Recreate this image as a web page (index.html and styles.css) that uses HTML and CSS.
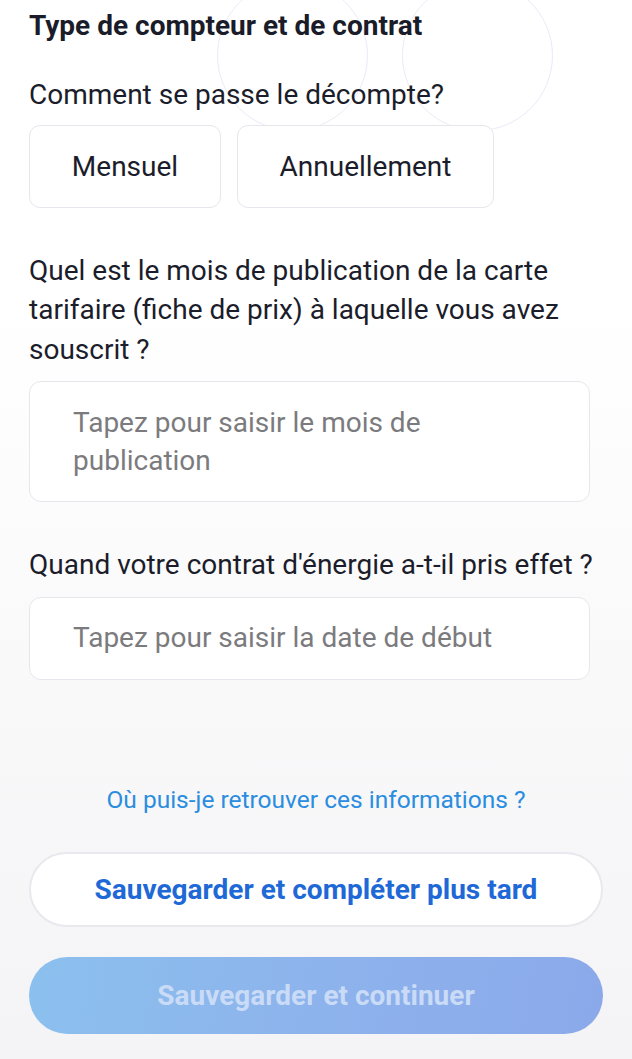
FILE: index.html
```html
<!DOCTYPE html>
<html lang="fr">
<head>
<meta charset="utf-8">
<title>Type de compteur et de contrat</title>
<link rel="stylesheet" href="styles.css">
</head>
<body>
<div class="page">
  <div class="deco" aria-hidden="true">
    <span class="ring ring-a"></span>
    <span class="ring ring-b"></span>
  </div>
  <h1 class="title">Type de compteur et de contrat</h1>

  <p class="question q-first">Comment se passe le décompte?</p>
  <div class="options">
    <button class="option opt-month">Mensuel</button>
    <button class="option opt-year">Annuellement</button>
  </div>

  <p class="question q-gap">Quel est le mois de publication de la carte tarifaire (fiche de prix) à laquelle vous avez souscrit ?</p>
  <div class="field field-tall">
    <span class="placeholder">Tapez pour saisir le mois de publication</span>
  </div>

  <p class="question q-gap">Quand votre contrat d'énergie a-t-il pris effet ?</p>
  <div class="field">
    <span class="placeholder">Tapez pour saisir la date de début</span>
  </div>

  <p class="help-link">Où puis-je retrouver ces informations ?</p>

  <button class="btn btn-secondary">Sauvegarder et compléter plus tard</button>
  <button class="btn btn-primary">Sauvegarder et continuer</button>
</div>
</body>
</html>
```

FILE: styles.css
```css
* { box-sizing: border-box; }
html, body { margin: 0; padding: 0; }
body {
  font-family: Roboto, "Noto Sans", "Liberation Sans", sans-serif;
  color: #1b1d2b;
}
.page {
  position: relative;
  overflow: hidden;
  min-height: 1059px;
  padding: 10px 29px 0;
  display: flex;
  flex-direction: column;
  background: linear-gradient(180deg, #ffffff 0px, #ffffff 300px, #f4f3f5 1059px);
}
.deco { position: absolute; inset: 0; pointer-events: none; }
.ring {
  position: absolute;
  top: -20px;
  width: 151px;
  height: 151px;
  border-radius: 50%;
  border: 1.5px solid #ebeaf7;
}
.ring-a { left: 217px; }
.ring-b { left: 402px; }
.title {
  position: relative;
  margin: 0;
  font-size: 28px;
  line-height: 32px;
  font-weight: 700;
  color: #1a1c29;
}
.question {
  position: relative;
  margin: 0;
  font-size: 28px;
  line-height: 39.5px;
  font-weight: 400;
  color: #1b1d2b;
}
.q-first { margin-top: 33px; }
.q-gap { margin-top: 43px; }
.options {
  position: relative;
  display: flex;
  gap: 16px;
  margin-top: 10px;
}
.option {
  height: 83px;
  background: #ffffff;
  border: 1.5px solid #e7e6ec;
  border-radius: 11px;
  font-family: inherit;
  font-size: 28px;
  color: #1b1d2b;
  padding: 0;
}
.opt-month { width: 192px; }
.opt-year { width: 257px; }
.field {
  margin-top: 12px;
  width: 561px;
  min-height: 83px;
  background: #ffffff;
  border: 1.5px solid #e7e6ec;
  border-radius: 12px;
  display: flex;
  align-items: center;
  padding: 0 60px 0 43px;
}
.field-tall { min-height: 121px; }
.placeholder {
  font-size: 28px;
  line-height: 38px;
  color: #7b7b7e;
}
.help-link {
  margin: 105px 0 0;
  text-align: center;
  font-size: 24.5px;
  line-height: 30px;
  color: #2b8ddf;
}
.btn {
  width: 574px;
  border-radius: 40px;
  font-family: inherit;
  font-weight: 700;
  font-size: 28px;
  padding: 0;
}
.btn-secondary {
  margin-top: 37px;
  height: 75px;
  background: #ffffff;
  border: 2.5px solid #e9e8ee;
  color: #1f69d7;
}
.btn-primary {
  margin-top: 30px;
  height: 77px;
  border: none;
  background: linear-gradient(100deg, #8bc0ee 0%, #8db3ec 50%, #8ba9ea 100%);
  color: #c9dbf6;
}
```
